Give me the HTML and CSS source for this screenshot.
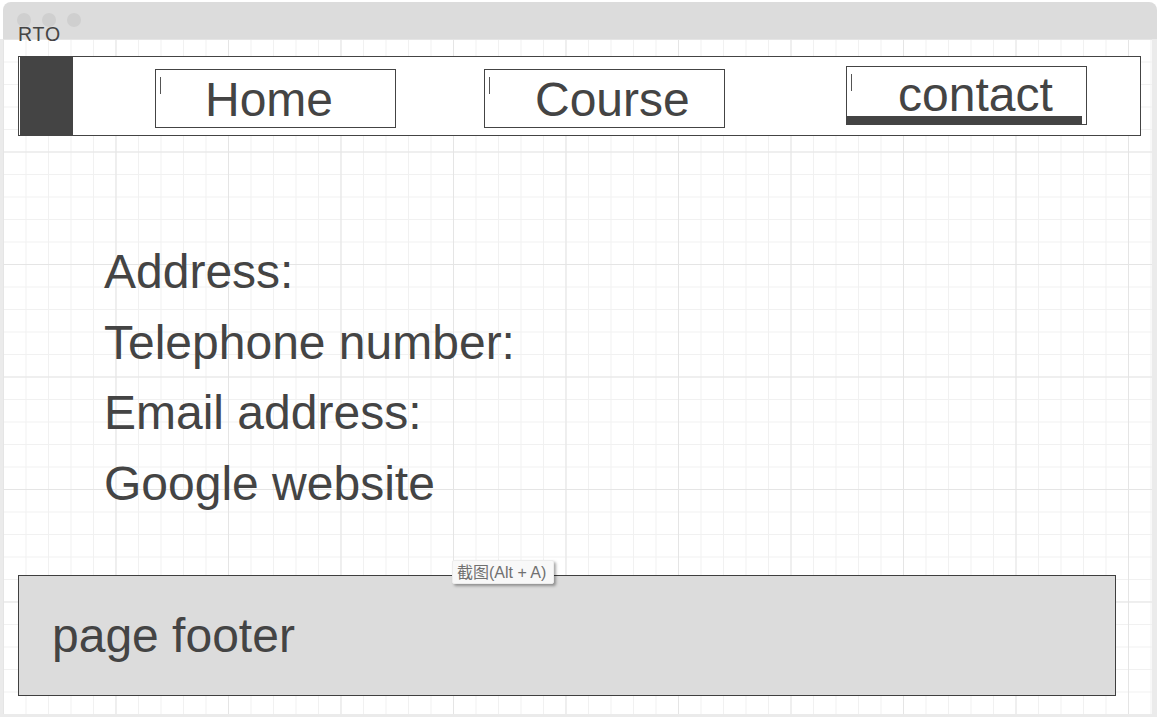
FILE: index.html
```html
<!DOCTYPE html>
<html lang="en">
<head>
<meta charset="utf-8">
<title>RTO - Contact</title>
<link rel="stylesheet" href="styles.css">
</head>
<body>
<div class="window">
  <div class="titlebar">
    <span class="dot"></span>
    <span class="dot"></span>
    <span class="dot"></span>
  </div>
  <span class="site-label">RTO</span>
  <main class="canvas">
    <nav class="nav">
      <div class="nav-logo"></div>
      <a class="nav-item nav-item--home" href="#"><span class="caret"></span><span class="nav-label">Home</span></a>
      <a class="nav-item nav-item--course" href="#"><span class="caret"></span><span class="nav-label">Course</span></a>
      <a class="nav-item nav-item--contact nav-item--active" href="#"><span class="caret"></span><span class="nav-label">contact</span></a>
    </nav>
    <section class="contact-info">
      <p>Address:</p>
      <p>Telephone number:</p>
      <p>Email address:</p>
      <p>Google website</p>
    </section>
    <footer class="footer">
      <span class="footer-text">page footer</span>
      <span class="tooltip">截图(Alt + A)</span>
    </footer>
  </main>
</div>
</body>
</html>
```
FILE: styles.css
```css
html, body {
  margin: 0;
  padding: 0;
  background: #ffffff;
}

body {
  font-family: "Liberation Sans", Arial, sans-serif;
  color: #444444;
  overflow: hidden;
}

.window {
  position: relative;
  width: 1157px;
  height: 717px;
  display: flex;
  flex-direction: column;
}

.titlebar {
  box-sizing: border-box;
  margin: 2px 0 0 3px;
  width: 1154px;
  height: 37px;
  background: #dcdcdc;
  border-radius: 8px 8px 0 0;
  display: flex;
  align-items: flex-start;
  gap: 11px;
  padding: 11px 0 0 14px;
}

.dot {
  width: 14px;
  height: 14px;
  border-radius: 50%;
  background: #cfcfcf;
}

.site-label {
  position: absolute;
  left: 18px;
  top: 25px;
  font-size: 19.5px;
  line-height: 19px;
  letter-spacing: 0.8px;
  color: #444444;
}

.canvas {
  box-sizing: border-box;
  flex: 1;
  width: 1157px;
  border-left: 3px solid #ebebeb;
  border-right: 5px solid #ebebeb;
  border-bottom: 3px solid #ebebeb;
  background-color: #ffffff;
  background-image:
    linear-gradient(to right, #e5e5e5 1px, transparent 1px),
    linear-gradient(to bottom, #e5e5e5 1px, transparent 1px),
    linear-gradient(to right, #f1f1f1 1px, transparent 1px),
    linear-gradient(to bottom, #f1f1f1 1px, transparent 1px);
  background-size: 112.5px 112.5px, 112.5px 112.5px, 22.5px 22.5px, 22.5px 22.5px;
  display: flex;
  flex-direction: column;
  align-items: flex-start;
}

.nav {
  box-sizing: border-box;
  display: flex;
  align-items: flex-start;
  margin: 17px 0 0 15px;
  width: 1123px;
  height: 80px;
  border: 1px solid #444444;
  background: #ffffff;
}

.nav-logo {
  align-self: stretch;
  width: 53px;
  margin-left: 1px;
  background: #444444;
}

.nav-item {
  position: relative;
  box-sizing: border-box;
  display: flex;
  align-items: flex-start;
  width: 241px;
  height: 59px;
  padding: 7px 0 0 4px;
  border: 1px solid #444444;
  background: #ffffff;
  color: #444444;
  text-decoration: none;
}

.nav-item--home {
  margin: 12px 0 0 82px;
}

.nav-item--course {
  margin: 12px 0 0 88px;
}

.nav-item--contact {
  margin: 9px 0 0 121px;
}

.nav-item--course .nav-label {
  margin-left: 45px;
}

.nav-item--contact .nav-label {
  margin-left: 46px;
}

.caret {
  flex: none;
  width: 1px;
  height: 17px;
  background: #555555;
}

.nav-label {
  margin-left: 44px;
  font-size: 48px;
  line-height: 46px;
  white-space: nowrap;
}

.nav-item--active .nav-label {
  margin-top: -2px;
}

.nav-item--active::after {
  content: "";
  position: absolute;
  left: -1px;
  bottom: -1px;
  width: 236px;
  height: 9px;
  background: #444444;
}

.contact-info {
  margin: 101px 0 0 101px;
  font-size: 48px;
  line-height: 70.5px;
  color: #444444;
}

.contact-info p {
  margin: 0;
  white-space: nowrap;
}

.footer {
  position: relative;
  box-sizing: border-box;
  display: flex;
  align-items: center;
  margin: 56px 0 0 15px;
  width: 1098px;
  height: 121px;
  padding-left: 33px;
  border: 1px solid #3f3f3f;
  background: #dcdcdc;
}

.footer-text {
  font-size: 48px;
  line-height: 46px;
  color: #444444;
}

.tooltip {
  position: absolute;
  left: 433px;
  top: -16px;
  box-sizing: border-box;
  height: 24px;
  padding: 0 7px 0 4px;
  font-family: "Liberation Sans", "Noto Sans CJK SC", sans-serif;
  font-size: 16px;
  line-height: 23px;
  color: #707070;
  background: #f8f8f8;
  border: 1px solid #ececec;
  border-radius: 2px;
  box-shadow: 2px 2px 3px rgba(0, 0, 0, 0.35);
  white-space: nowrap;
}
```
